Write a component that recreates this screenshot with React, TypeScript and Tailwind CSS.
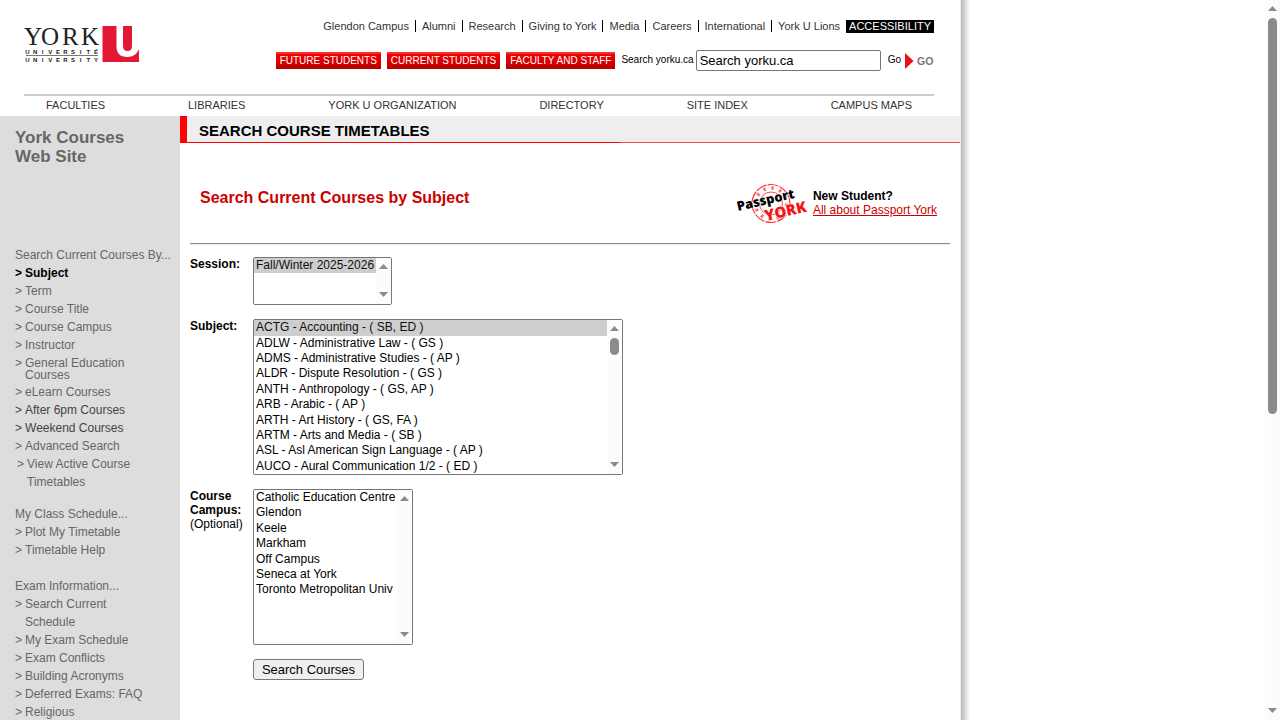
import type { ReactNode } from "react";

const topLinks = [
  "Glendon Campus",
  "Alumni",
  "Research",
  "Giving to York",
  "Media",
  "Careers",
  "International",
  "York U Lions",
];

const audiences = ["FUTURE STUDENTS", "CURRENT STUDENTS", "FACULTY AND STAFF"];

const mainLinks = [
  "FACULTIES",
  "LIBRARIES",
  "YORK U ORGANIZATION",
  "DIRECTORY",
  "SITE INDEX",
  "CAMPUS MAPS",
];

const subjects = [
  "ACTG - Accounting - ( SB, ED )",
  "ADLW - Administrative Law - ( GS )",
  "ADMS - Administrative Studies - ( AP )",
  "ALDR - Dispute Resolution - ( GS )",
  "ANTH - Anthropology - ( GS, AP )",
  "ARB - Arabic - ( AP )",
  "ARTH - Art History - ( GS, FA )",
  "ARTM - Arts and Media - ( SB )",
  "ASL - Asl American Sign Language - ( AP )",
  "AUCO - Aural Communication 1/2 - ( ED )",
];

const campuses = [
  "Catholic Education Centre",
  "Glendon",
  "Keele",
  "Markham",
  "Off Campus",
  "Seneca at York",
  "Toronto Metropolitan Univ",
];

function Logo() {
  return (
    <svg width="116" height="38" viewBox="0 0 116 38" className="overflow-visible" role="img" aria-label="York University">
      <g fontFamily="'Liberation Serif', serif" fontSize="25" fill="#222">
        <text x="0" y="19">Y</text>
        <text x="17" y="19">O</text>
        <text x="38" y="19">R</text>
        <text x="57" y="19">K</text>
      </g>
      <g fontFamily="'Liberation Sans', sans-serif" fontSize="6" fontWeight="700" fill="#222" textAnchor="middle">
        {[..."UNIVERSITÉ"].map((c, i) => (
          <text key={i} x={3.5 + i * 7.6} y="28">{c}</text>
        ))}
        {[..."UNIVERSITY"].map((c, i) => (
          <text key={i} x={3.5 + i * 7.6} y="36">{c}</text>
        ))}
      </g>
      <path d="M2 29.5H74" stroke="#555" strokeWidth="0.8" />
      <path d="M78.500 0H92.500V21C92.500 27 96 31 103.500 31C109 31 113 28 115 23V36H78.500Z" fill="#e31837" />
      <path d="M99 0H108V20C108 23.500 106.500 25 103.500 25C100.500 25 99 23.500 99 20Z" fill="#e31837" />
    </svg>
  );
}

function PassportStamp() {
  return (
    <svg width="72" height="42" viewBox="0 0 72 42" className="overflow-visible" role="img" aria-label="Passport York">
      <g fill="none" stroke="#f33">
        <circle cx="35" cy="20.500" r="19" strokeWidth="1.200" strokeDasharray="11 1.200" />
        <circle cx="35" cy="20.500" r="11.500" strokeWidth="0.900" />
        <circle cx="35" cy="20.500" r="15.500" strokeWidth="3.500" strokeDasharray="2.500 5.600" opacity="0.700" />
      </g>
      <g fontFamily="'Open Sans', 'Noto Sans', sans-serif" fontWeight="800" stroke="#fff" strokeWidth="1" paintOrder="stroke">
        <text x="2" y="28" fontSize="13" transform="rotate(-13 2 28)">Passport</text>
        <text x="30" y="38" fontSize="15" fill="#f01414" fontWeight="800" transform="rotate(-13 30 38)">YORK</text>
      </g>
    </svg>
  );
}

function ScrollBar({ children }: { children?: ReactNode }) {
  return (
    <div className="flex h-full w-[15px] flex-col items-center gap-[7px] bg-[#fcfcfc] pb-[7px] pt-1.5" aria-hidden="true">
      <svg width="9" height="5" viewBox="0 0 9 5" className="shrink-0">
        <path d="M4.500 0L9 5H0Z" fill="#8b8b8b" />
      </svg>
      <div className="min-h-0 w-[9px] flex-1">{children}</div>
      <svg width="9" height="5" viewBox="0 0 9 5" className="shrink-0">
        <path d="M4.500 5L9 0H0Z" fill="#8b8b8b" />
      </svg>
    </div>
  );
}

function ListBox({ children, thumb }: { children: ReactNode; thumb?: ReactNode }) {
  return (
    <div className="relative w-fit">
      {children}
      <div className="absolute inset-y-px right-px">
        <ScrollBar>{thumb}</ScrollBar>
      </div>
    </div>
  );
}

function SideHeading({ children }: { children: ReactNode }) {
  return <h3 className="whitespace-nowrap leading-[18px]">{children}</h3>;
}

function SideLink({ children, className = "leading-[18px]" }: { children: ReactNode; className?: string }) {
  return (
    <li className={className}>
      <a href="#" className="flex gap-[3px]">
        <span>&gt;</span>
        <span>{children}</span>
      </a>
    </li>
  );
}

const selectClass =
  "block rounded-[2px] border border-[#767676] bg-white text-xs leading-[14px] text-black";

const optionClass = "box-content px-0.5 pb-px";

export default function App() {
  return (
    <div className="flex h-screen bg-white font-['Liberation_Sans',Arial,sans-serif] text-black">
      <div className="flex min-w-0 flex-1 overflow-y-auto">
        <div className="flex min-h-[1248px] w-full max-w-[960px] flex-col">
          <header className="pl-6 pr-[26px]">
            <div className="flex h-[94px] items-start justify-between">
              <a href="#" className="pt-[26px]">
                <Logo />
              </a>
              <div className="flex flex-col items-end pt-5">
                <nav className="flex items-start text-[11px] leading-[13px] text-[#333]">
                  {topLinks.map((t, i) => (
                    <a
                      key={t}
                      href="#"
                      className={i < topLinks.length - 1 ? "mr-1.5 border-r border-black pr-1.5 leading-3" : "mr-1.5"}
                    >
                      {t}
                    </a>
                  ))}
                  <a href="#" className="bg-black px-[3px] text-white">
                    ACCESSIBILITY
                  </a>
                </nav>
                <form className="mt-[17px] flex items-center text-[10px]">
                  <div className="flex gap-1.5">
                    {audiences.map((t) => (
                      <a
                        key={t}
                        href="#"
                        className="border-t-2 border-[#ee3333] bg-linear-to-b from-[#f60000] to-[#b80000] px-1 pb-0.5 leading-[13px] text-white"
                      >
                        {t}
                      </a>
                    ))}
                  </div>
                  <label htmlFor="site-search" className="ml-1.5 mr-0.5 pb-0.5">
                    Search yorku.ca
                  </label>
                  <input
                    id="site-search"
                    defaultValue="Search yorku.ca"
                    className="h-[21px] w-[185px] rounded-[2px] border border-[#767676] bg-white px-[3px] text-[13px]"
                  />
                  <button type="button" className="ml-[7px] flex items-center gap-1">
                    <span className="pb-0.5">Go</span>
                    <svg width="29" height="16" viewBox="0 0 29 16" aria-hidden="true">
                      <path d="M0 0L8.500 8L0 16Z" fill="#e81010" />
                      <text x="12" y="12" fontFamily="Liberation Sans, sans-serif" fontSize="10.500" fontWeight="700" fill="#777">
                        GO
                      </text>
                    </svg>
                  </button>
                </form>
              </div>
            </div>
            <nav className="flex justify-between border-t-2 border-[#ccc] px-[22px] pb-0.5 text-[11px] leading-[18px] text-[#333]">
              {mainLinks.map((t) => (
                <a key={t} href="#">
                  {t}
                </a>
              ))}
            </nav>
          </header>

          <div className="flex flex-1">
            <aside className="w-[180px] shrink-0 bg-[#ddd] pl-[15px] text-xs text-[#666]">
              <h2 className="h-[130px] pt-3 text-[17px] font-bold leading-[19px]">
                York Courses
                <br />
                Web Site
              </h2>
              <SideHeading>Search Current Courses By...</SideHeading>
              <ul>
                <SideLink className="font-bold leading-[18px] text-black">Subject</SideLink>
                <SideLink>Term</SideLink>
                <SideLink>Course Title</SideLink>
                <SideLink>Course Campus</SideLink>
                <SideLink>Instructor</SideLink>
                <SideLink className="pb-0.5 pt-[3px] leading-3">
                  General Education
                  <br />
                  Courses
                </SideLink>
                <SideLink>eLearn Courses</SideLink>
                <SideLink className="leading-[18px] text-[#444]">After 6pm Courses</SideLink>
                <SideLink className="leading-[18px] text-[#444]">Weekend Courses</SideLink>
                <SideLink>Advanced Search</SideLink>
                <SideLink className="pl-0.5 leading-[18px]">
                  View Active Course
                  <br />
                  Timetables
                </SideLink>
              </ul>
              <div className="mt-[14px]">
                <SideHeading>My Class Schedule...</SideHeading>
                <ul>
                  <SideLink>Plot My Timetable</SideLink>
                  <SideLink>Timetable Help</SideLink>
                </ul>
              </div>
              <div className="mt-[18px]">
                <SideHeading>Exam Information...</SideHeading>
                <ul>
                  <SideLink>
                    Search Current
                    <br />
                    Schedule
                  </SideLink>
                  <SideLink>My Exam Schedule</SideLink>
                  <SideLink>Exam Conflicts</SideLink>
                  <SideLink>Building Acronyms</SideLink>
                  <SideLink>Deferred Exams: FAQ</SideLink>
                  <SideLink>Religious</SideLink>
                </ul>
              </div>
            </aside>

            <main className="min-w-0 flex-1">
              <div className="border-l-[7px] border-[#f00] bg-[#eee]">
                <h1 className="pl-3 pt-[3px] text-[15px] font-bold leading-[23px]">SEARCH COURSE TIMETABLES</h1>
                <div className="h-px bg-linear-to-r from-[#f00] from-56% to-[#ff4a4a] to-56%" />
              </div>

              <div className="flex items-center justify-between pl-5 pr-[23px] pt-10">
                <h2 className="pb-3 text-base font-bold leading-[18px] text-[#c00]">Search Current Courses by Subject</h2>
                <div className="flex items-center gap-[5px] text-xs leading-[14px]">
                  <PassportStamp />
                  <p className="pb-0.5">
                    <strong>New Student?</strong>
                    <br />
                    <a href="#" className="text-[#c00] underline">
                      All about Passport York
                    </a>
                  </p>
                </div>
              </div>

              <hr className="mx-2.5 mt-[18px] border-b border-t border-b-[#eee] border-t-[#888]" />

              <form className="mx-2.5 mt-3 grid grid-cols-[53px_1fr] gap-x-2.5 gap-y-[14px] text-xs leading-[14px]">
                <label htmlFor="session" className="font-bold">
                  Session:
                </label>
                <ListBox>
                  <select id="session" multiple size={3} defaultValue={["Fall/Winter 2025-2026"]} className={selectClass + " w-[139px]"}>
                    <option className={optionClass}>Fall/Winter 2025-2026</option>
                  </select>
                </ListBox>

                <label htmlFor="subject" className="font-bold">
                  Subject:
                </label>
                <ListBox thumb={<div className="h-[17px] rounded-full bg-[#8b8b8b]" />}>
                  <select id="subject" size={10} defaultValue={subjects[0]} className={selectClass + " w-[370px]"}>
                    {subjects.map((s) => (
                      <option key={s} className={optionClass}>
                        {s}
                      </option>
                    ))}
                  </select>
                </ListBox>

                <label htmlFor="campus">
                  <strong>Course Campus:</strong>
                  <br />
                  (Optional)
                </label>
                <ListBox>
                  <select id="campus" multiple size={10} className={selectClass + " w-[160px]"}>
                    {campuses.map((c) => (
                      <option key={c} className={optionClass}>
                        {c}
                      </option>
                    ))}
                  </select>
                </ListBox>

                <button
                  type="button"
                  className="col-start-2 h-[21px] w-[111px] rounded-[3px] border border-[#767676] bg-[#efefef] text-[13px] leading-[15px]"
                >
                  Search Courses
                </button>
              </form>
            </main>
          </div>
        </div>
        <div className="min-h-[1248px] w-2.5 border-l border-[#eee] bg-linear-to-r from-[#b8b8b8] to-white" />
      </div>
      <ScrollBar>
        <div className="h-[58%] rounded-full bg-[#8b8b8b]" />
      </ScrollBar>
    </div>
  );
}
